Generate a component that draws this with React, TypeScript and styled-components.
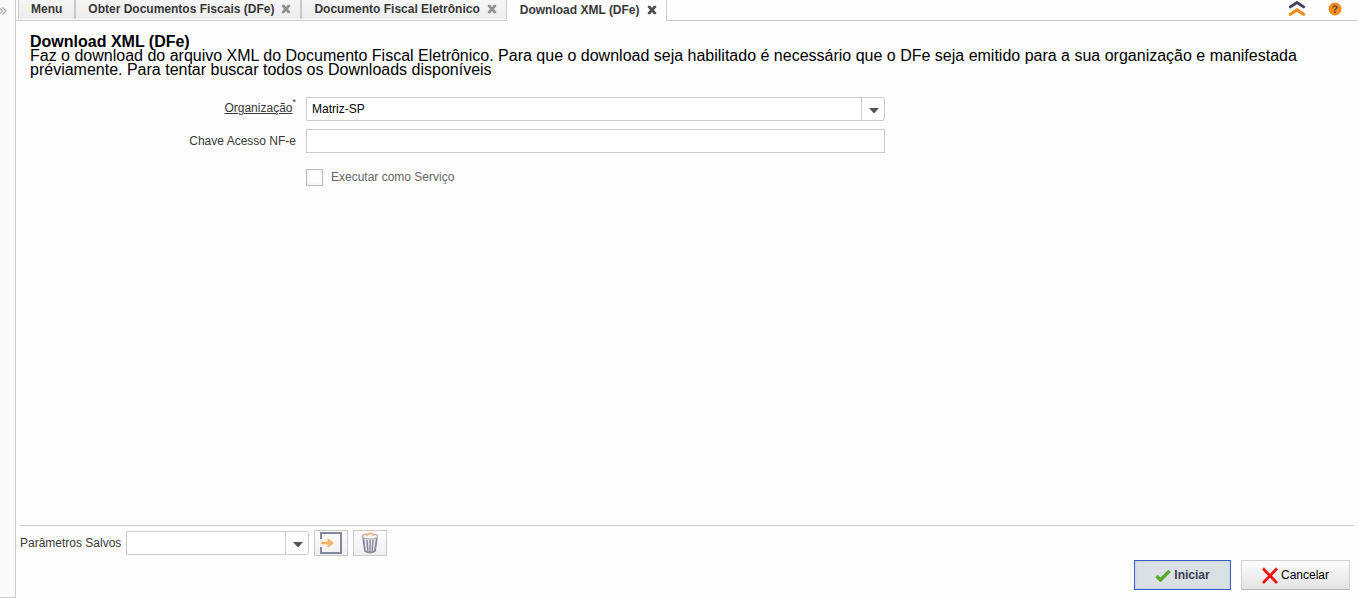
import React, { useState } from "react";
import styled, { createGlobalStyle, css } from "styled-components";

const line = "#cacaca";

const GlobalStyle = createGlobalStyle`
  * { box-sizing: border-box; }
  body {
    margin: 0;
    background: #fdfdfd;
    color: #383838;
    font-family: "Liberation Sans", Arial, sans-serif;
    font-size: 12px;
    line-height: 14px;
  }
  button, input, select { font: inherit; margin: 0; }
`;

const Shell = styled.div`
  display: flex;
  min-height: 100vh;
`;

const Rail = styled.aside`
  flex: none;
  width: 16px;
  background: #fafafa;
  border-right: 1px solid ${line};
  border-bottom: 1px solid ${line};
`;

const ExpandButton = styled.button`
  display: block;
  padding: 6px 0 0;
  border: 0;
  background: none;
  svg { display: block; }
`;

const Main = styled.div`
  flex: 1;
  min-width: 0;
  display: flex;
  flex-direction: column;
`;

const TopBar = styled.header`
  display: flex;
  height: 21px;
`;

const TabList = styled.nav`
  display: flex;
  padding-left: 2px;
  border-bottom: 1px solid ${line};
`;

const Tab = styled.div<{ $active?: boolean; $closable?: boolean }>`
  display: flex;
  align-items: center;
  gap: 7px;
  height: 19px;
  padding: 0 ${(p) => (p.$closable ? "9px" : "12px")} 1px 12px;
  border-left: 1px solid ${line};
  border-right: 1px solid ${line};
  background: linear-gradient(#f6f6f6, #ececec);
  ${(p) =>
    p.$active &&
    css`
      height: 21px;
      border-left-color: #fdfdfd;
      background: #fdfdfd;
    `}
`;

const TabLink = styled.a`
  color: #383838;
  font-weight: bold;
  text-decoration: none;
  white-space: nowrap;
`;

const CloseButton = styled.button<{ $active?: boolean }>`
  padding: 0 0 1px;
  border: 0;
  background: none;
  color: ${(p) => (p.$active ? "#505050" : "#909090")};
  svg { display: block; }
`;

const Tools = styled.div`
  flex: 1;
  display: flex;
  justify-content: flex-end;
  align-items: flex-start;
  gap: 23px;
  padding: 1px 16px 0 0;
  border-bottom: 1px solid ${line};
`;

const ToolButton = styled.button`
  padding: 0;
  border: 0;
  background: none;
  svg { display: block; }
`;

const Content = styled.main`
  flex: 1;
  padding: 14px 14px 0;
`;

const Intro = styled.section`
  color: #000;
  font-size: 16px;
  line-height: 14px;
`;

const Title = styled.h1`
  margin: 0;
  font-size: 16px;
  line-height: 14px;
`;

const Description = styled.p`
  margin: 0;
`;

const Form = styled.form`
  display: grid;
  grid-template-columns: 266px minmax(0, 579px);
  column-gap: 10px;
  row-gap: 8px;
  padding-top: 20px;
`;

const FieldLabel = styled.label`
  display: flex;
  align-items: flex-start;
  justify-self: end;
  padding-top: 5px;
  white-space: nowrap;
`;

const RequiredLabel = styled(FieldLabel)`
  padding-top: 0;
`;

const Underlined = styled.span`
  padding-top: 4px;
  text-decoration: underline;
`;

const Required = styled.span`
  font-size: 9px;
  line-height: 10px;
`;

const TextInput = styled.input`
  width: 100%;
  height: 24px;
  padding: 0 5px;
  border: 1px solid ${line};
  background: #fff;
  outline: none;
`;

const ComboBox = styled.div<{ $small?: boolean }>`
  display: grid;
  width: ${(p) => (p.$small ? "183px" : "100%")};
`;

const Select = styled.select`
  grid-area: 1 / 1;
  width: 100%;
  height: 24px;
  padding: 0 28px 0 5px;
  border: 1px solid ${line};
  border-radius: 0 3px 3px 0;
  background: #fff;
  color: #000;
  appearance: none;
  outline: none;
`;

const Arrow = styled.span`
  grid-area: 1 / 1;
  justify-self: end;
  display: grid;
  place-items: center;
  width: 24px;
  height: 24px;
  padding-top: 3px;
  border-left: 1px solid ${line};
  pointer-events: none;
`;

const CheckRow = styled.label`
  grid-column: 2;
  display: flex;
  align-items: center;
  gap: 8px;
  margin-top: 8px;
  color: #666;
  span { padding-bottom: 2px; }
`;

const CheckBox = styled.input`
  appearance: none;
  width: 17px;
  height: 17px;
  border: 1px solid #bbb;
  background: #fdfdfd;
  box-shadow: inset 0 0 3px #e4e4e4;
  &:checked { background: #888; }
`;

const Footer = styled.footer`
  margin: 0 4px;
  padding: 4px 4px 8px 0;
  border-top: 1px solid ${line};
`;

const SavedRow = styled.div`
  display: flex;
  align-items: center;
  gap: 5px;
`;

const IconButton = styled.button`
  display: grid;
  place-items: center;
  width: 34px;
  height: 26px;
  padding: 0;
  border: 1px solid ${line};
  background: linear-gradient(#fdfdfd, #f0f0f0);
`;

const Actions = styled.div`
  display: flex;
  justify-content: flex-end;
  gap: 10px;
  padding-top: 4px;
`;

const ActionButton = styled.button<{ $primary?: boolean }>`
  display: flex;
  align-items: center;
  justify-content: center;
  gap: 3px;
  width: 109px;
  height: 30px;
  padding: 0;
  border: 1px solid #d2d2d2;
  border-bottom-color: #b5b5b5;
  background: linear-gradient(#fdfdfd, #e3e3e3);
  color: #000;
  ${(p) =>
    p.$primary &&
    css`
      width: 97px;
      border-color: #3f5cc0;
      background: #dae1e5;
      box-shadow: inset 0 0 2px #8fc4ec;
      color: #3c4050;
      font-weight: bold;
    `}
`;

const CloseIcon = () => (
  <svg width="10" height="10" viewBox="0 0 10 10" aria-hidden="true">
    <path
      d="M1.2 .8H3.2L5 3.1 6.8 .8H8.8L9.4 2 7 5 9.4 8 8.8 9.2H6.8L5 6.9 3.2 9.2H1.2L.6 8 3 5 .6 2Z"
      fill="currentColor"
    />
  </svg>
);

const DownIcon = () => (
  <svg width="10" height="5" viewBox="0 0 10 5" aria-hidden="true">
    <path d="M0 0H10L5.5 5H4.5Z" fill="#555" />
  </svg>
);

const ExpandIcon = () => (
  <svg width="8" height="10" viewBox="0 0 8 10" aria-hidden="true">
    <path d="M-1 1.5 2.5 5-1 8.5M2.5 1.5 6 5 2.5 8.5" fill="none" stroke="#aaa" strokeWidth="1.2" />
  </svg>
);

const CollapseIcon = () => (
  <svg width="16" height="15" viewBox="0 0 16 15" aria-hidden="true">
    <path d="M1.4 5.9 8 1.5 14.6 5.9" fill="none" stroke="#3d405b" strokeWidth="2.8" strokeLinecap="round" />
    <path d="M1.4 13.3 8 8.9 14.6 13.3" fill="none" stroke="#f58a1c" strokeWidth="3" strokeLinecap="round" />
  </svg>
);

const HelpIcon = () => (
  <svg width="14" height="16" viewBox="0 0 14 16" aria-hidden="true">
    <circle cx="7" cy="8" r="6.5" fill="#f58a1c" />
    <path d="M5.2 6.5C5.2 4.3 8.8 4.3 8.8 6.4 8.8 7.8 7 7.8 7 9.4" fill="none" stroke="#4a4450" strokeWidth="1.4" />
    <circle cx="7" cy="11.2" r="0.9" fill="#4a4450" />
  </svg>
);

const LoadIcon = () => (
  <svg width="24" height="24" viewBox="0 0 24 24" aria-hidden="true">
    <path d="M2 8V2H22V22H2V16" fill="none" stroke="#85889a" strokeWidth="2" />
    <path d="M2 12H10" stroke="#f9b467" strokeWidth="2.8" />
    <path d="M8.5 7 15 12 8.5 17Z" fill="#f9b467" />
  </svg>
);

const TrashIcon = () => (
  <svg width="18" height="22" viewBox="0 0 18 22" aria-hidden="true">
    <path d="M2 5 4 19Q9 22 14 19L16 5" fill="#e6e7eb" stroke="#85889a" strokeWidth="1.8" />
    <path d="M6 8 6.8 19M9 8V20M12 8 11.2 19" stroke="#85889a" strokeWidth="1.4" />
    <ellipse cx="9" cy="4.5" rx="7.6" ry="2.6" fill="#f9f6f2" stroke="#b4b6c0" strokeWidth="1.4" />
    <path d="M5.8 4.2Q6 1.4 9 1.4 12 1.4 12.2 4.2" fill="none" stroke="#f9bd85" strokeWidth="1.8" />
  </svg>
);

const CheckIcon = () => (
  <svg width="16" height="14" viewBox="0 0 16 14" aria-hidden="true">
    <path d="M1.5 8 5.5 12 14.5 3" fill="none" stroke="#5aa92b" strokeWidth="3.4" />
  </svg>
);

const CancelIcon = () => (
  <svg width="16" height="18" viewBox="0 0 16 18" aria-hidden="true">
    <path d="M1 2.5 15 17M15 2.5 1 17" stroke="#fb0d0d" strokeWidth="2.7" />
  </svg>
);

const tabs = [
  "Menu",
  "Obter Documentos Fiscais (DFe)",
  "Documento Fiscal Eletrônico",
  "Download XML (DFe)",
];

export default function App() {
  const [key, setKey] = useState("");
  const [asService, setAsService] = useState(false);

  return (
    <Shell>
      <GlobalStyle />
      <Rail>
        <ExpandButton type="button" aria-label="Expandir painel">
          <ExpandIcon />
        </ExpandButton>
      </Rail>
      <Main>
        <TopBar>
          <TabList>
            {tabs.map((name, i) => {
              const active = i === tabs.length - 1;
              const closable = i > 0;
              return (
                <Tab key={name} $active={active} $closable={closable}>
                  <TabLink href="#">{name}</TabLink>
                  {closable && (
                    <CloseButton type="button" $active={active} aria-label={`Fechar ${name}`}>
                      <CloseIcon />
                    </CloseButton>
                  )}
                </Tab>
              );
            })}
          </TabList>
          <Tools>
            <ToolButton type="button" aria-label="Recolher">
              <CollapseIcon />
            </ToolButton>
            <ToolButton type="button" aria-label="Ajuda">
              <HelpIcon />
            </ToolButton>
          </Tools>
        </TopBar>
        <Content>
          <Intro>
            <Title>Download XML (DFe)</Title>
            <Description>
              Faz o download do arquivo XML do Documento Fiscal Eletrônico. Para que o download seja
              habilitado é necessário que o DFe seja emitido para a sua organização e manifestada
              préviamente. Para tentar buscar todos os Downloads disponíveis
            </Description>
          </Intro>
          <Form id="params">
            <RequiredLabel htmlFor="org">
              <Underlined>Organização</Underlined>
              <Required>*</Required>
            </RequiredLabel>
            <ComboBox>
              <Select id="org">
                <option>Matriz-SP</option>
              </Select>
              <Arrow>
                <DownIcon />
              </Arrow>
            </ComboBox>
            <FieldLabel htmlFor="key">Chave Acesso NF-e</FieldLabel>
            <TextInput id="key" value={key} onChange={(e) => setKey(e.target.value)} />
            <CheckRow>
              <CheckBox
                type="checkbox"
                checked={asService}
                onChange={(e) => setAsService(e.target.checked)}
              />
              <span>Executar como Serviço</span>
            </CheckRow>
          </Form>
        </Content>
        <Footer>
          <SavedRow>
            <label htmlFor="saved">Parâmetros Salvos</label>
            <ComboBox $small>
              <Select id="saved" defaultValue="">
                <option value=""></option>
              </Select>
              <Arrow>
                <DownIcon />
              </Arrow>
            </ComboBox>
            <IconButton type="button" aria-label="Carregar parâmetros">
              <LoadIcon />
            </IconButton>
            <IconButton type="button" aria-label="Excluir parâmetros">
              <TrashIcon />
            </IconButton>
          </SavedRow>
          <Actions>
            <ActionButton type="button" $primary>
              <CheckIcon />
              Iniciar
            </ActionButton>
            <ActionButton type="button">
              <CancelIcon />
              Cancelar
            </ActionButton>
          </Actions>
        </Footer>
      </Main>
    </Shell>
  );
}
